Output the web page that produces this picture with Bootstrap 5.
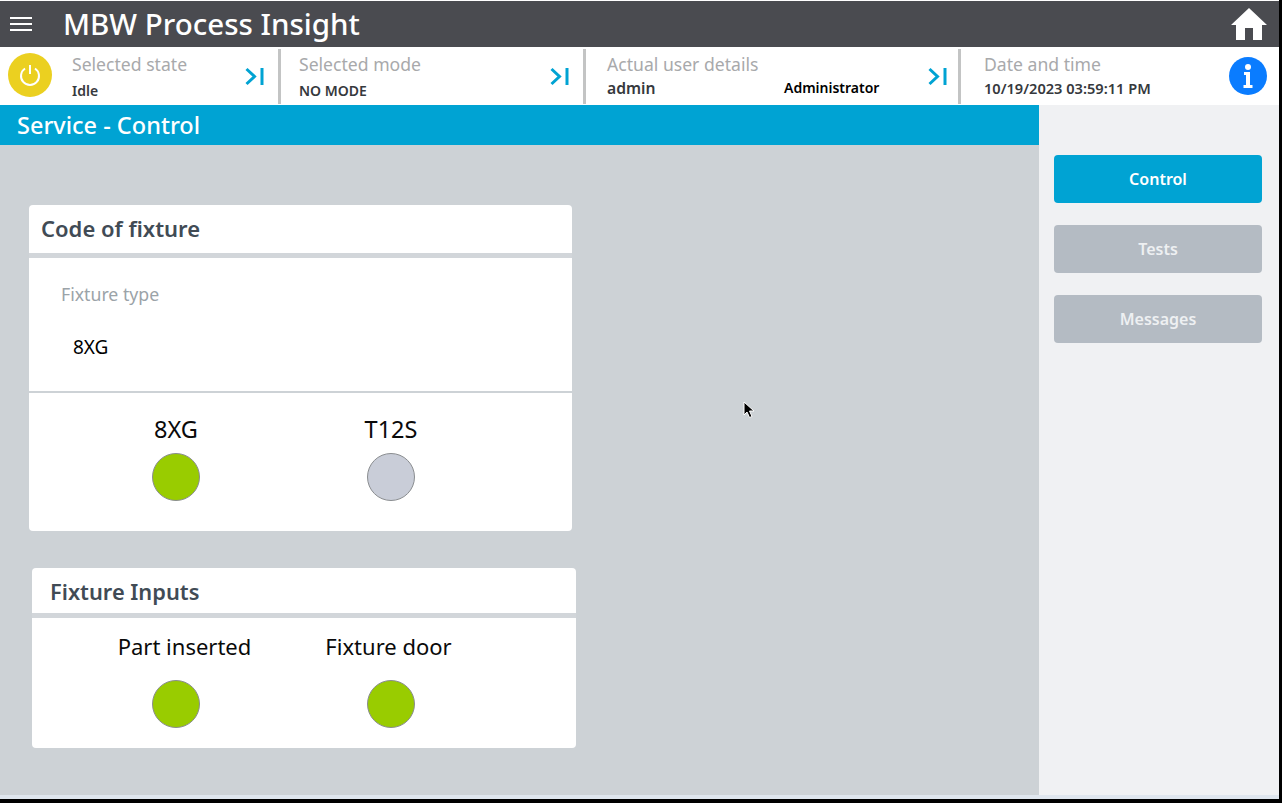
<!DOCTYPE html>
<html lang="en">
<head>
<meta charset="utf-8">
<title>MBW Process Insight</title>
<link rel="stylesheet" href="https://cdn.jsdelivr.net/npm/bootstrap@5.3.0/dist/css/bootstrap.min.css">
<style>
html,body{height:100%;overflow:hidden;background:#000}
body{font-family:"Noto Sans","Open Sans",sans-serif;color:#000}
.app-shell{width:1279px;height:799px;background:#fff;display:flex;flex-direction:column;padding-top:1px}
.top-bar{height:46px;background:#4a4b50;color:#fff;flex:none}
.burger{width:24px;margin-left:9px;margin-right:30px;display:block}
.app-title{font-size:29.5px;font-weight:500;line-height:46px;white-space:nowrap}
.home-ico{width:38px;height:34px;margin-right:11px;display:block}
.status-row{height:58px;flex:none;background:#fff}
.stat{position:relative;height:55px;flex:none;margin-top:2px}
.stat-sep{border-right:3px solid #c3c4c4}
.s1{width:281px}.s2{width:305px}.s3{width:375px}.s4{flex:1 1 auto}
.stat-txt{height:100%;padding-top:5px}
.stat-lbl{font-size:17.6px;color:#a8a9ab;line-height:21px;white-space:nowrap}
.stat-val{font-size:14px;font-weight:600;color:#36393d;line-height:20px;white-space:nowrap}
.s1 .stat-txt{padding-left:72px}.s2 .stat-txt{padding-left:18px}.s3 .stat-txt{padding-left:21px;width:100%}.s4 .stat-txt{padding-left:23px}
.s1 .stat-val,.s2 .stat-val{margin-top:6px}
.s3 .stat-val{margin-top:3px;display:flex}
.s3 .uname{width:177px;font-size:15.7px}
.s3 .urole{color:#000}
.s4 .stat-val{margin-top:3px;font-size:14.6px}
.go-ico{position:absolute;top:18px;width:19px;height:19px}
.s1 .go-ico{left:245px}.s2 .go-ico{left:269px}.s3 .go-ico{left:342px}
.pwr{position:absolute;left:8px;top:4px;width:44px;height:44px;border-radius:50%;background:#ebd020;display:flex;align-items:center;justify-content:center}
.info{position:absolute;right:12px;top:8px;width:38px;height:38px}
.work{flex:1 1 auto;min-height:0}
.main-col{width:1039px;background:#cdd2d6;flex:none;display:flex;flex-direction:column}
.page-title{height:40px;background:#00a3d3;color:#fff;font-size:23.5px;font-weight:500;line-height:41px;padding-left:17px;flex:none}
.side-col{flex:1 1 auto;background:#f0f1f3;padding:50px 17px 0 15px;display:flex;flex-direction:column;gap:22px}
.side-btn{height:48px;border:0;border-radius:4px;font-size:16px;font-weight:600;color:#fff;padding:0 0 1px;background:#b4bbc3;width:208px}
.side-btn.on{background:#00a3d3}
.side-btn.off{color:#eef0f2}
.canvas{flex:1 1 auto;position:relative}
.panel{background:#fff;border-radius:4px;overflow:hidden}
.p1{width:543px;height:326px;margin:60px 0 0 29px}
.p2{width:544px;height:180px;margin:37px 0 0 32px}
.panel-head{height:48px;border-bottom:5px solid #d2d6da;font-weight:600;color:#414b55;box-sizing:content-box}
.p1 .panel-head{padding-left:12px;line-height:46px;font-size:22px}
.p2 .panel-head{padding-left:18px;height:45px;line-height:48px;font-size:21.8px}
.type-box{height:133px;border-bottom:2px solid #cdd2d6;box-sizing:content-box;position:relative}
.type-lbl{font-size:17.7px;color:#9ba3a8;padding:24px 0 0 32px;line-height:24px}
.type-val{font-size:19px;padding:29px 0 0 44px;line-height:24px}
.lamp-wrap{width:0;display:flex;flex-direction:column;align-items:center;position:relative;flex:none}
.lamp-name{line-height:30px;white-space:nowrap;color:#0a0a0a;font-size:22px}
.lamp{width:48px;height:48px;border-radius:50%;border:1px solid #8a8d90;background:#9c0;flex:none;display:block}
.lamp.idle{background:#c9cdd8}
.p1 .lamps{padding:21px 0 0 147px;gap:215px}
.p1 .lamp-name{margin-bottom:9px;font-size:23.5px}
.p2 .lamps{padding:13px 0 0 144px;gap:215px}
.p2 .lamp-name{margin-bottom:19px}
.shift-r{margin-left:17px}
.shift-l{margin-right:5px}
.foot-strip{height:4px;background:#dfe6ee;flex:none}
.cursor{position:absolute;left:743px;top:256px;width:12px;height:18px}
</style>
</head>
<body>
<div class="app-shell">
  <div class="top-bar d-flex align-items-center">
    <svg class="burger" viewBox="0 0 24 16" aria-hidden="true"><path d="M1 2h22M1 8h22M1 14h22" stroke="#fff" stroke-width="2.2" fill="none"/></svg>
    <div class="app-title">MBW Process Insight</div>
    <svg class="home-ico ms-auto" viewBox="0 0 38 34" aria-hidden="true"><path fill="#fff" d="M19 1 37 18H32V33H23V21H15V33H6V18H1Z"/></svg>
  </div>
  <div class="status-row d-flex">
    <div class="stat s1 stat-sep">
      <div class="pwr"><svg width="24" height="24" viewBox="0 0 24 24" aria-hidden="true"><path d="M12 2v9" stroke="#fff" stroke-width="2" fill="none"/><path d="M7 5.500a9 9 0 1 0 10 0" stroke="#fff" stroke-width="2" fill="none"/></svg></div>
      <div class="stat-txt"><div class="stat-lbl">Selected state</div><div class="stat-val">Idle</div></div>
      <svg class="go-ico" viewBox="0 0 19 19" aria-hidden="true"><path d="M1.500 2 9.500 9.500 1.500 17M17 1v17" stroke="#00a3d3" stroke-width="3" fill="none"/></svg>
    </div>
    <div class="stat s2 stat-sep">
      <div class="stat-txt"><div class="stat-lbl">Selected mode</div><div class="stat-val">NO MODE</div></div>
      <svg class="go-ico" viewBox="0 0 19 19" aria-hidden="true"><path d="M1.500 2 9.500 9.500 1.500 17M17 1v17" stroke="#00a3d3" stroke-width="3" fill="none"/></svg>
    </div>
    <div class="stat s3 stat-sep">
      <div class="stat-txt"><div class="stat-lbl">Actual user details</div><div class="stat-val"><span class="uname">admin</span><span class="urole">Administrator</span></div></div>
      <svg class="go-ico" viewBox="0 0 19 19" aria-hidden="true"><path d="M1.500 2 9.500 9.500 1.500 17M17 1v17" stroke="#00a3d3" stroke-width="3" fill="none"/></svg>
    </div>
    <div class="stat s4">
      <div class="stat-txt"><div class="stat-lbl">Date and time</div><div class="stat-val">10/19/2023 03:59:11 PM</div></div>
      <svg class="info" viewBox="0 0 38 38" aria-hidden="true"><circle cx="19" cy="19" r="19" fill="#0a7cff"/><circle cx="19" cy="10" r="3" fill="#fff"/><path d="M15 15h6v13h2.500v3h-9v-3H17V18h-2Z" fill="#fff"/></svg>
    </div>
  </div>
  <div class="work d-flex">
    <div class="main-col">
      <div class="page-title">Service - Control</div>
      <div class="canvas">
        <div class="panel p1">
          <div class="panel-head">Code of fixture</div>
          <div class="type-box">
            <div class="type-lbl">Fixture type</div>
            <div class="type-val">8XG</div>
          </div>
          <div class="lamps d-flex">
            <div class="lamp-wrap"><span class="lamp-name">8XG</span><span class="lamp"></span></div>
            <div class="lamp-wrap"><span class="lamp-name">T12S</span><span class="lamp idle"></span></div>
          </div>
        </div>
        <div class="panel p2">
          <div class="panel-head">Fixture Inputs</div>
          <div class="lamps d-flex">
            <div class="lamp-wrap"><span class="lamp-name shift-r">Part inserted</span><span class="lamp"></span></div>
            <div class="lamp-wrap"><span class="lamp-name shift-l">Fixture door</span><span class="lamp"></span></div>
          </div>
        </div>
        <svg class="cursor" viewBox="0 0 12 18" aria-hidden="true"><path d="M1 1v13l3-3 2.500 5.500 2.500-1L6.500 10H11Z" fill="#000" stroke="#fff" stroke-width="1"/></svg>
      </div>
    </div>
    <div class="side-col">
      <button class="btn side-btn on" type="button">Control</button>
      <button class="btn side-btn off" type="button">Tests</button>
      <button class="btn side-btn off" type="button">Messages</button>
    </div>
  </div>
  <div class="foot-strip"></div>
</div>
<script src="https://cdn.jsdelivr.net/npm/bootstrap@5.3.0/dist/js/bootstrap.bundle.min.js"></script>
</body>
</html>
